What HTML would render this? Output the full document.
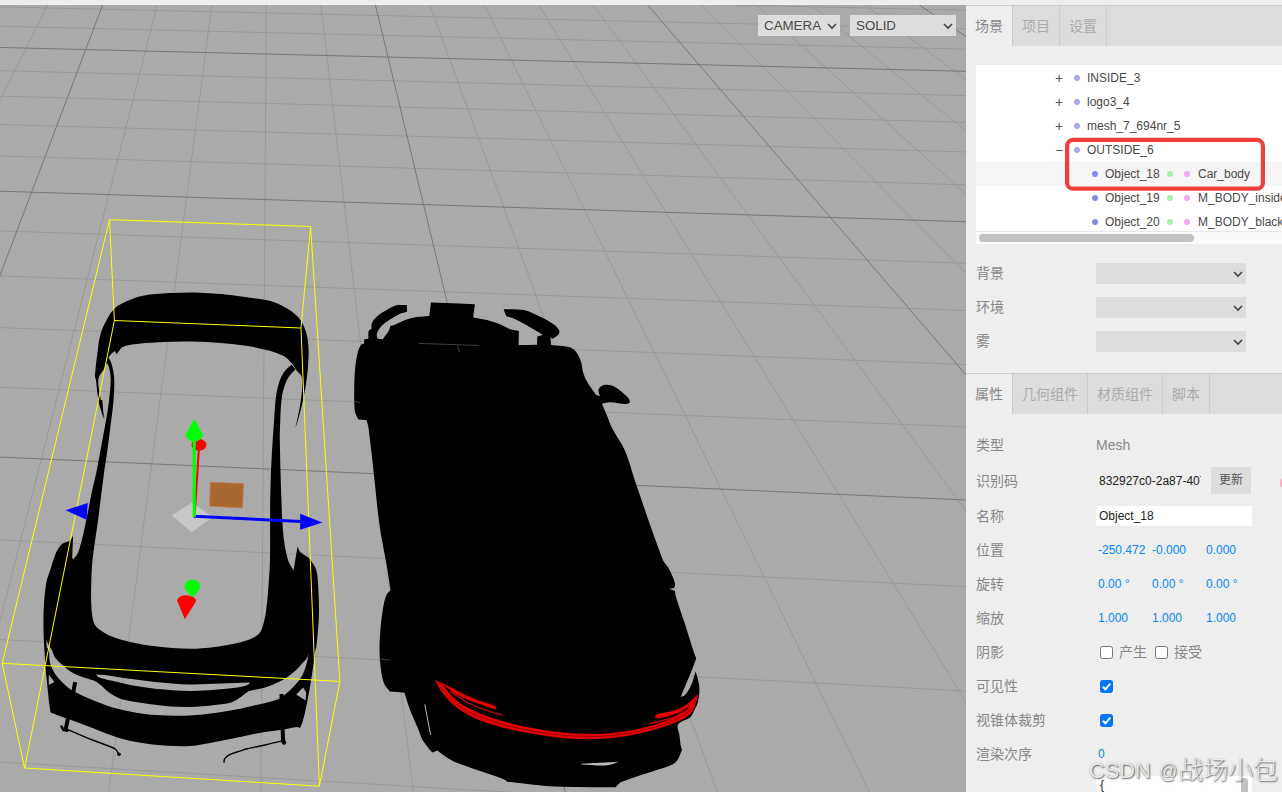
<!DOCTYPE html>
<html><head><meta charset="utf-8"><title>three.js editor</title>
<style>
*{box-sizing:border-box;margin:0;padding:0}
html,body{width:1282px;height:792px;overflow:hidden;background:#aaa}
body{position:relative;font-family:"Liberation Sans","Noto Sans CJK SC",sans-serif;font-size:14px;color:#888}
.abs{position:absolute}
#topbar{left:0;top:0;width:1282px;height:5px;background:#eee}
#vp{left:0;top:0;width:966px;height:792px;overflow:hidden;background:#aaa}
#side{left:966px;top:5px;width:316px;height:787px;background:#eee;overflow:hidden}
.tabs{left:0;width:316px;height:41px;background:#ddd;border-top:1px solid #ccc}
.tab{position:absolute;top:0;height:40px;line-height:40px;text-align:center;color:#aaa;border-right:1px solid #ccc;font-size:14px}
.tab.sel{background:#eee;color:#888}
.sel2{background:#ddd;height:21px;color:#4a4a4a;font-size:13.33px;line-height:21px;padding-left:6px}
.chev{position:absolute;right:2.3px;top:4.5px}
.lbl{position:absolute;left:10px;height:20px;line-height:20px;font-size:14px;color:#888;white-space:nowrap}
.num{position:absolute;font-size:12px;color:#08f;height:20px;line-height:20px;white-space:nowrap}
.row{position:absolute;left:0;width:400px;height:24px;line-height:24px;font-size:12px;color:#484848;white-space:nowrap}
.dot{position:absolute;top:9px;width:6px;height:6px;border-radius:50%}
.row span{position:absolute;top:0}
.cb{position:absolute;width:13px;height:13px;border:1px solid #767676;border-radius:2.5px;background:#fff}
.cb.on{background:#0075ff;border-color:#0075ff}
</style></head><body>
<div id="vp" class="abs"><svg width="966" height="792" viewBox="0 0 966 792" style="position:absolute;left:0;top:0">
<path d="M-154.1 -126.5L-4648.3 3142.6M-116.5 -125.9L-4300.0 3220.6M-78.8 -125.3L-3936.4 3301.9M-2.9 -124.0L-3158.8 3475.9M35.3 -123.4L-2742.5 3569.1M73.6 -122.7L-2306.0 3666.7M112.0 -122.1L-1847.8 3769.3M189.3 -120.8L-859.7 3990.4M228.2 -120.2L-326.0 4109.8M267.2 -119.6L237.2 4235.8M306.4 -118.9L832.2 4368.9M385.1 -117.6L2129.5 4659.2M424.7 -117.0L2838.3 4817.8M464.4 -116.3L3592.4 4986.6M504.3 -115.6L4396.3 5166.4M584.6 -114.3L6174.4 5564.3M624.9 -113.7L7161.1 5785.1M665.4 -113.0L8222.7 6022.6M706.1 -112.3L9368.2 6278.9M787.8 -111.0L11954.1 6857.6M829.0 -110.3L13420.9 7185.7M870.2 -109.6L15025.2 7544.7M911.7 -108.9L16787.5 7939.1M995.0 -107.6L20889.5 8856.9M1036.9 -106.9L23295.8 9395.3M1079.0 -106.2L25997.0 9999.8M1121.2 -105.5L29051.1 10683.1M1206.2 -104.1L36535.2 12357.8M1248.9 -103.4L41188.8 13399.1M1291.8 -102.7L46665.0 14624.4M1334.9 -102.0L53202.8 16087.3M-303.1 -129.0L1552.7 -98.4M-320.1 -119.9L1594.4 -87.5M-357.3 -100.1L1686.3 -63.4M-377.7 -89.2L1737.2 -50.1M-399.5 -77.5L1791.9 -35.7M-422.7 -65.1L1850.8 -20.3M-474.6 -37.5L1983.5 14.5M-503.5 -22.0L2058.6 34.1M-534.7 -5.3L2140.6 55.6M-568.6 12.8L2230.4 79.1M-645.8 54.0L2438.6 133.7M-690.0 77.5L2560.3 165.5M-738.6 103.5L2696.3 201.2M-792.5 132.2L2849.6 241.3M-919.5 200.0L3222.7 339.0M-995.1 240.4L3452.8 399.3M-1081.1 286.3L3721.8 469.8M-1179.5 338.8L4040.5 553.3M-1426.8 470.8L4894.3 776.9M-1585.0 555.2L5484.7 931.6M-1775.8 657.1L6247.9 1131.5M-2010.4 782.3L7272.8 1399.9M-2689.0 1144.5L10926.7 2357.0M-3206.2 1420.6L14687.9 3342.2M-3942.7 1813.7L22552.1 5402.1M-5075.3 2418.2L49287.7 12405.1" stroke="#989898" stroke-width="1" fill="none"/>
<path d="M-40.9 -124.6L-3556.4 3386.9M150.6 -121.5L-1366.3 3877.0M345.7 -118.3L1462.0 4509.8M544.4 -115.0L5255.0 5358.6M746.9 -111.6L10608.0 6556.4M953.3 -108.2L18732.3 8374.2M1163.6 -104.8L32531.7 11462.0M-338.1 -110.3L1638.8 -75.8M-447.7 -51.8L1914.5 -3.6M-605.5 32.5L2329.2 105.0M-852.4 164.2L3023.6 286.9M-1293.4 399.6L4424.0 653.7M-2305.7 939.9L8721.8 1779.5" stroke="#787878" stroke-width="1" fill="none"/>
<path d="M379.5 524.9C376.9 506.0 375.4 487.0 373.2 468.0C371.7 454.3 370.2 440.7 368.4 427.0C368.0 424.7 367.2 422.5 366.7 420.2C363.9 419.9 361.1 419.6 358.3 419.4C357.2 416.9 355.5 414.5 355.0 411.8C354.1 406.4 354.2 400.7 354.2 395.2C354.2 386.8 354.3 378.4 355.0 370.1C355.5 364.5 356.2 358.9 357.5 353.4C358.2 350.5 359.2 347.6 360.9 345.1C361.5 344.0 363.1 344.0 364.2 343.4C364.2 342.0 364.2 340.6 364.2 339.2C365.6 339.1 367.0 338.9 368.4 338.7C368.5 336.1 368.0 333.4 368.7 330.9C369.0 329.7 370.9 329.5 371.4 328.4C372.0 326.8 371.0 324.9 371.7 323.4C372.9 320.8 374.6 318.5 376.7 316.7C379.7 314.0 383.2 312.0 386.7 310.0C389.9 308.2 393.2 306.2 396.7 305.3C400.0 304.5 403.4 305.1 406.8 305.0C406.9 307.2 407.0 309.5 407.1 311.7C404.8 312.4 402.3 312.7 400.1 313.7C397.2 315.0 394.4 316.7 391.7 318.4C388.9 320.2 385.9 322.0 383.4 324.2C381.5 325.9 379.7 327.9 378.4 330.1C377.5 331.6 376.9 333.3 376.7 335.1C376.6 336.3 377.3 337.5 377.5 338.7C379.2 338.9 380.9 339.1 382.6 339.2C384.8 336.2 387.4 333.4 389.2 330.1C389.9 328.8 389.8 327.3 390.1 325.9C391.5 325.6 392.9 325.6 394.2 325.0C397.9 323.6 401.3 321.4 405.1 320.0C408.9 318.7 412.8 317.7 416.8 317.0C420.9 316.3 425.1 316.3 429.3 315.9C429.8 311.4 430.4 307.0 431.0 302.5C445.6 303.1 460.2 303.6 474.9 304.2C474.3 308.6 473.7 313.1 473.2 317.5C477.8 318.4 482.4 318.9 486.9 320.0C491.4 321.2 495.9 322.5 500.2 324.2C503.7 325.6 506.7 328.0 510.2 329.2C513.0 330.2 516.0 330.3 518.9 330.9C518.8 335.6 518.7 340.3 518.6 345.1C524.7 345.0 530.8 344.9 537.0 344.7C537.1 342.0 537.2 339.2 537.3 336.4C539.1 336.0 541.0 335.5 542.8 335.1C539.7 333.1 536.8 331.0 533.6 329.2C528.1 326.0 522.6 322.8 516.9 320.0C513.4 318.3 509.7 317.3 506.1 315.9C505.2 313.6 504.4 311.4 503.6 309.2C510.2 309.5 517.0 308.8 523.6 310.0C528.9 311.0 533.8 313.6 538.6 315.9C543.8 318.3 548.9 320.9 553.6 324.2C555.8 325.7 557.8 327.7 559.0 330.1C559.6 331.3 559.5 333.1 558.7 334.2C557.2 336.2 554.8 337.2 552.8 338.7C552.0 338.3 551.1 338.0 550.3 337.6C550.6 340.1 550.9 342.6 551.1 345.1C557.0 345.7 563.0 345.8 568.8 346.9C570.6 347.2 572.3 348.2 573.8 349.4C575.5 350.9 576.9 352.9 578.1 355.0C579.5 357.4 580.5 359.9 581.2 362.5C582.2 365.8 582.1 369.3 583.1 372.5C584.2 376.0 585.7 379.4 587.5 382.5C590.1 386.9 593.3 390.8 596.2 395.0C597.5 395.4 598.8 395.8 600.0 396.2C599.5 394.2 598.2 392.1 598.5 390.0C598.7 388.5 599.9 387.0 601.2 386.2C603.1 385.2 605.4 384.7 607.5 384.8C610.1 384.9 612.7 385.7 615.0 386.9C617.8 388.3 620.1 390.5 622.5 392.5C624.7 394.4 627.0 396.4 628.8 398.8C629.5 399.8 629.6 401.2 630.0 402.5C628.8 403.0 627.6 404.0 626.2 404.0C620.8 403.9 615.4 402.3 610.0 402.2C607.2 402.2 604.6 403.2 601.9 403.8C603.3 407.1 604.8 410.4 606.2 413.8C608.4 418.8 610.0 424.1 612.5 429.0C616.2 436.3 621.6 442.7 624.8 450.2C629.7 461.7 632.5 474.0 636.6 485.8C645.2 510.6 653.4 535.5 662.9 560.0C664.0 562.9 666.6 564.9 668.2 567.6C669.9 570.5 671.4 573.5 672.7 576.7C673.7 579.1 674.7 581.6 675.0 584.2C675.2 585.5 674.5 586.8 674.2 588.0C672.5 588.3 670.7 588.5 668.9 588.8C671.0 589.5 673.0 590.3 675.0 591.1C675.3 592.8 675.2 594.7 675.8 596.4C678.5 605.5 681.9 614.5 684.8 623.6C687.5 631.7 689.8 639.8 692.4 647.9C693.6 651.4 694.9 654.9 696.2 658.5C694.8 662.3 693.4 666.2 691.9 670.0C688.2 679.0 684.4 687.9 680.6 696.9C682.1 696.2 683.9 696.2 685.0 695.0C687.6 692.1 689.6 688.6 691.2 685.0C693.2 680.6 694.2 675.8 695.6 671.2C696.2 673.3 697.0 675.4 697.5 677.5C698.3 681.2 699.3 684.9 699.4 688.8C699.5 692.9 699.1 697.2 698.1 701.2C697.2 704.8 695.4 708.0 693.8 711.2C692.7 713.4 691.9 716.0 690.0 717.5C687.1 719.9 683.1 720.4 680.0 722.5C678.8 723.4 677.6 724.7 677.5 726.2C677.4 729.2 678.9 732.1 679.4 735.0C679.9 738.3 680.1 741.7 680.6 745.0C680.9 746.7 681.5 748.3 681.9 750.0C680.4 753.3 679.5 757.0 677.5 760.0C676.3 761.9 674.5 763.4 672.5 764.4C668.5 766.4 664.2 767.5 660.0 769.0C654.3 771.0 648.5 772.7 642.8 774.6C635.4 777.1 628.0 779.8 620.5 782.3C618.8 784.0 617.1 785.6 615.5 787.2C597.5 787.1 579.6 787.4 561.7 786.8C551.5 786.5 541.4 785.3 531.3 784.4C523.2 783.6 515.1 782.6 506.9 781.7C506.3 781.0 505.6 780.4 504.9 779.7C500.2 778.0 495.5 776.3 490.7 774.6C479.7 770.8 468.4 767.5 457.5 763.1C453.1 761.4 449.0 758.8 445.0 756.2C442.4 754.6 440.0 752.5 437.5 750.6C435.8 751.2 434.2 751.9 432.5 752.5C431.7 751.7 430.7 750.9 430.0 750.0C427.4 746.7 424.6 743.6 422.5 740.0C420.6 736.6 419.7 732.7 418.2 729.1C415.4 722.3 412.1 715.6 409.5 708.6C407.6 703.4 406.2 698.0 404.5 692.7C399.6 692.3 394.7 692.0 389.8 691.6C387.9 688.9 385.3 686.7 384.1 683.6C382.2 678.6 381.4 673.1 380.7 667.7C379.9 661.7 379.5 655.6 379.5 649.5C379.5 642.0 380.1 634.4 380.7 626.8C381.2 620.7 381.9 614.6 383.0 608.6C383.8 604.0 384.6 599.3 386.4 595.0C387.1 593.1 389.1 592.0 390.5 590.5C389.5 583.6 388.6 576.8 387.5 570.0C386.7 564.8 385.6 559.6 384.7 554.4C382.9 544.6 380.8 534.8 379.5 524.9Z" fill="#000"/>
<path d="M581.5 763.7C594.0 763.1 606.4 762.4 618.9 761.8C615.0 763.0 611.3 765.0 607.2 765.3C598.7 765.9 590.1 764.7 581.5 764.4C581.5 764.1 581.5 763.9 581.5 763.7Z" fill="#bbb"/>
<path d="M424.8 704.4 L430.6 735.0" stroke="#c8c8c8" stroke-width="0.9" fill="none"/>
<path d="M418.6 343.4 L479.4 345.5M457.2 345.5 L459.5 352.3M354.2 401.2 L360.2 402.7M380.2 659.2 L390.5 660.2" stroke="#666" stroke-width="0.6" fill="none"/>
<path d="M435.2 679.8C436.4 682.3 437.3 685.1 438.8 687.5C440.6 690.6 442.7 693.5 445.0 696.2C448.1 699.8 451.3 703.3 455.0 706.2C458.9 709.4 463.1 712.0 467.5 714.4C472.3 717.0 477.3 719.4 482.5 721.2C490.7 724.2 499.1 726.6 507.5 728.8C515.7 730.8 524.1 732.3 532.5 733.8C540.8 735.2 549.1 736.5 557.5 737.5C564.6 738.3 571.7 738.7 578.8 739.0C585.0 739.2 591.3 739.2 597.5 739.0C603.8 738.7 610.0 738.3 616.2 737.5C622.5 736.7 628.8 735.6 635.0 734.4C641.3 733.1 647.6 731.7 653.8 730.0C660.1 728.2 666.3 726.1 672.5 723.8C676.8 722.1 681.1 720.5 685.0 718.1C687.9 716.3 690.5 714.0 692.5 711.2C694.4 708.7 695.2 705.5 696.2 702.5C697.1 699.9 697.5 697.1 698.1 694.4C697.1 695.2 695.8 695.8 695.0 696.9C693.5 699.0 692.7 701.6 691.2 703.8C689.4 706.4 687.6 709.3 685.0 711.2C681.2 714.1 676.9 716.2 672.5 718.1C666.4 720.8 660.1 723.0 653.8 725.0C647.6 726.9 641.3 728.5 635.0 729.8C628.8 731.0 622.5 731.8 616.2 732.5C610.0 733.2 603.8 733.8 597.5 734.0C591.2 734.2 585.0 733.8 578.8 733.5C571.7 733.1 564.6 732.7 557.5 731.9C549.1 730.9 540.8 729.7 532.5 728.1C524.1 726.6 515.7 724.8 507.5 722.5C499.1 720.2 490.7 717.4 482.5 714.4C478.2 712.8 474.0 710.9 470.0 708.8C465.7 706.5 461.4 704.2 457.5 701.2C454.2 698.7 451.5 695.5 448.8 692.5C446.5 690.1 444.9 687.2 442.5 685.0C440.3 683.0 437.7 681.5 435.2 679.8Z" fill="#e40000"/>
<path d="M440.0 686.2C442.3 689.0 444.5 691.8 446.9 694.4C449.9 697.6 452.8 701.0 456.2 703.8C460.1 706.8 464.4 709.3 468.8 711.6C473.2 714.0 477.8 716.2 482.5 717.9C490.7 720.8 499.1 723.4 507.5 725.6C515.7 727.8 524.1 729.5 532.5 731.0C540.8 732.5 549.1 733.8 557.5 734.8C564.6 735.6 571.7 735.9 578.8 736.2C585.0 736.5 591.3 736.7 597.5 736.5C603.8 736.3 610.0 735.7 616.2 735.0C622.5 734.3 628.8 733.4 635.0 732.1C641.3 730.9 647.6 729.3 653.8 727.5C660.1 725.6 666.4 723.5 672.5 721.0C676.8 719.2 681.2 717.4 685.0 714.8C687.7 712.8 690.0 710.2 691.9 707.5C693.6 705.0 694.4 702.1 695.6 699.4" stroke="#400" stroke-width="0.6" fill="none" opacity=".8"/>
<path d="M436.2 680.0C441.2 682.5 446.2 685.0 451.2 687.5C458.3 691.0 465.2 695.1 472.5 698.1C479.8 701.2 487.5 703.1 495.0 705.6C495.6 707.1 496.2 708.5 496.9 710.0C490.0 707.7 483.0 705.7 476.2 703.1C469.9 700.7 463.5 698.2 457.5 695.0C453.0 692.6 449.2 689.2 445.0 686.2C442.1 684.2 439.2 682.1 436.2 680.0Z" fill="#e40000"/>
<path d="M654.4 718.1C655.2 716.8 656.0 715.4 656.9 714.0C662.9 712.8 669.1 712.0 675.0 710.2C678.5 709.2 681.9 707.6 685.0 705.6C687.8 703.9 690.0 701.5 692.5 699.4C694.2 697.9 695.8 696.3 697.5 694.8C696.7 696.5 696.2 698.5 695.0 700.0C692.8 702.8 690.4 705.4 687.5 707.5C684.0 710.0 680.3 712.2 676.2 713.8C671.0 715.8 665.5 717.0 660.0 718.1C658.2 718.5 656.2 718.1 654.4 718.1Z" fill="#e40000"/>
<path d="M450.0 691.2C456.7 695.4 463.0 700.1 470.0 703.8C476.0 706.8 482.4 709.0 488.8 711.2C493.2 712.8 497.9 713.9 502.5 715.2M648.8 723.8C652.5 722.9 656.3 722.3 660.0 721.2C665.1 719.9 670.1 718.4 675.0 716.5C678.5 715.1 681.7 713.0 685.0 711.2" stroke="#e40000" stroke-width="1.2" fill="none"/>
<path d="M114.6 308.4C117.7 305.5 121.6 303.6 125.5 301.8C131.2 299.3 136.9 296.9 143.0 295.7C151.6 294.0 160.4 293.7 169.2 293.1C177.9 292.6 186.7 292.3 195.4 292.4C204.9 292.6 214.4 293.3 223.8 294.2C233.3 295.1 242.7 296.6 252.2 297.9C258.0 298.7 264.0 299.1 269.7 300.7C275.8 302.6 281.6 305.2 287.1 308.4C291.2 310.7 295.0 313.6 298.1 317.1C300.9 320.3 303.0 324.1 304.6 328.0C306.3 332.2 307.3 336.7 307.9 341.2C308.6 346.2 308.7 351.3 308.5 356.4C308.3 363.7 307.7 371.0 306.8 378.3C306.0 384.9 304.9 391.4 303.5 397.9C302.3 403.8 300.7 409.6 299.2 415.4C298.0 419.8 296.7 424.1 295.4 428.5C297.0 420.5 299.0 412.6 300.2 404.5C301.4 397.3 302.2 390.0 302.4 382.7C302.5 380.4 302.3 378.1 301.3 376.1C300.1 373.6 297.6 371.8 295.9 369.5C294.6 367.8 294.0 365.6 292.6 364.1C289.6 360.9 286.8 357.2 282.8 355.4C274.5 351.6 265.5 349.5 256.6 347.7C245.8 345.5 234.8 344.4 223.8 343.3C212.9 342.3 202.0 341.8 191.0 341.6C180.1 341.4 169.2 341.7 158.3 342.2C149.5 342.7 140.8 343.2 132.1 344.4C128.7 344.9 125.1 345.4 122.2 347.3C119.8 348.9 118.6 351.9 116.8 354.3C116.1 353.2 115.3 352.1 114.6 351.0C112.8 352.8 110.5 354.3 109.1 356.4C107.9 358.4 107.8 360.9 107.0 363.0C106.0 365.2 104.9 367.4 103.7 369.5C102.4 371.8 100.3 373.7 99.3 376.1C98.5 378.1 98.1 380.4 98.2 382.7C98.5 387.8 99.5 392.9 100.4 397.9C101.7 405.3 103.3 412.5 104.8 419.8C102.6 412.5 99.9 405.4 98.2 397.9C96.9 392.2 96.9 386.3 96.0 380.5C95.8 379.0 94.9 377.6 94.9 376.1C95.4 368.1 96.5 360.1 97.6 352.1C98.3 346.2 98.8 340.3 100.4 334.6C101.9 329.3 104.3 324.2 107.0 319.3C109.1 315.4 111.4 311.4 114.6 308.4Z" fill="#000"/>
<path d="M107.0 361.9C107.1 363.9 108.7 365.5 109.1 367.4C110.0 370.9 110.6 374.6 110.7 378.3C110.8 383.4 110.3 388.5 109.8 393.6C109.3 399.4 108.5 405.2 107.6 411.0C106.5 418.4 105.0 425.6 103.7 432.9C102.5 439.6 101.2 446.3 100.0 453.0C98.9 458.7 98.1 464.4 96.9 470.0C95.6 476.3 93.9 482.5 92.5 488.8C91.2 495.0 90.0 501.2 88.8 507.5C87.5 513.8 86.3 520.0 85.0 526.2C83.8 531.7 82.7 537.1 81.2 542.5C80.2 546.3 79.2 550.2 77.5 553.8C76.5 555.9 74.6 557.5 73.1 559.4C72.8 558.8 72.5 558.1 72.2 557.5C72.5 550.2 72.8 542.9 73.1 535.6C72.1 537.3 71.6 539.4 70.0 540.6C67.8 542.3 64.7 542.1 62.5 543.8C60.4 545.4 58.8 547.7 57.5 550.0C55.9 552.7 54.8 555.8 53.8 558.8C52.5 562.1 51.7 565.6 50.6 569.0C49.3 573.3 47.2 577.5 46.4 582.0C44.9 591.0 44.1 600.1 43.7 609.3C43.2 618.4 43.5 627.5 43.7 636.6C43.8 641.0 44.1 645.5 44.4 650.0C44.8 656.3 45.1 662.5 45.6 668.8C46.1 675.0 46.9 681.3 47.5 687.5C48.1 693.3 48.6 699.2 49.4 705.0C49.7 707.5 50.2 710.0 50.6 712.5C55.4 714.4 60.2 716.4 65.0 718.1C67.0 718.9 69.2 719.3 71.2 720.0C78.4 722.6 85.4 725.4 92.5 728.1C100.8 731.3 109.0 734.9 117.5 737.5C125.7 740.0 134.1 741.7 142.5 743.1C150.8 744.5 159.1 745.2 167.5 745.8C175.0 746.2 182.5 746.6 190.0 746.0C198.4 745.3 206.7 743.4 215.0 741.9C223.4 740.3 231.7 738.5 240.0 736.9C248.3 735.2 256.6 733.3 265.0 731.9C270.0 731.0 275.0 730.8 280.0 730.0C285.9 729.1 291.6 727.4 297.5 726.9C298.4 726.8 299.2 727.7 300.0 728.1C300.6 726.7 301.4 725.3 301.9 723.8C303.1 720.0 304.1 716.3 305.0 712.5C306.4 706.3 307.6 700.0 308.8 693.8C309.9 687.5 310.9 681.3 311.9 675.0C312.5 670.8 313.2 666.7 313.8 662.5C314.3 658.3 314.7 654.1 315.4 650.0C315.5 649.1 316.1 648.4 316.2 647.5C317.1 641.3 317.7 635.0 318.1 628.8C318.6 622.5 319.0 616.3 319.0 610.0C319.0 601.7 318.7 593.3 318.1 585.0C317.8 580.0 317.7 574.8 316.2 570.0C315.2 566.3 312.6 563.3 310.6 560.0C310.0 559.0 309.4 558.1 308.5 557.4C305.9 555.4 302.6 554.3 300.3 551.9C298.9 550.5 298.5 548.3 297.6 546.5C296.2 554.5 294.8 562.5 293.5 570.5C291.7 567.0 289.1 563.9 288.0 560.1C285.7 552.1 284.2 543.8 283.4 535.6C282.0 522.0 281.7 508.3 281.2 494.6C280.5 476.4 280.1 458.2 279.8 440.0C279.7 434.0 279.9 428.0 280.2 422.0C280.5 413.9 280.7 405.9 281.7 397.9C282.3 393.5 283.5 389.1 285.0 384.8C286.0 381.8 287.5 378.8 289.3 376.1C291.0 373.6 293.4 371.7 295.4 369.5C294.3 367.9 293.1 366.3 291.9 364.7C290.7 365.6 289.3 366.3 288.2 367.4C286.2 369.4 284.2 371.4 282.8 373.9C280.9 377.3 279.5 381.1 278.4 384.8C277.2 389.1 276.3 393.5 275.8 397.9C274.8 405.9 274.6 414.0 274.0 422.0C273.3 432.3 272.4 442.6 271.9 453.0C271.1 466.8 270.5 480.7 270.3 494.6C269.9 516.4 270.3 538.2 270.0 560.0C270.0 564.2 269.6 568.3 269.4 572.5C269.0 578.8 268.6 585.0 268.1 591.2C267.6 597.5 267.1 603.8 266.2 610.0C265.7 614.2 264.9 618.4 263.8 622.5C262.8 625.9 262.1 629.6 260.0 632.5C258.2 635.0 255.3 636.7 252.5 638.1C248.6 640.1 244.3 641.5 240.0 642.5C231.8 644.4 223.4 645.8 215.0 646.9C206.7 647.9 198.4 648.8 190.0 648.8C178.3 648.6 166.6 647.6 155.0 646.2C146.6 645.3 138.2 643.8 130.0 641.9C123.6 640.4 117.3 638.7 111.2 636.2C107.3 634.7 103.5 632.4 100.0 630.0C98.1 628.7 96.2 627.0 95.0 625.0C93.6 622.7 93.0 620.1 92.5 617.5C91.7 613.0 91.4 608.3 91.2 603.8C91.0 597.5 91.1 591.2 91.2 585.0C91.5 576.7 91.6 568.3 92.5 560.0C93.9 546.6 96.3 533.3 98.1 520.0C99.2 511.7 100.2 503.3 101.2 495.0C102.3 486.7 103.2 478.3 104.4 470.0C105.1 464.3 106.2 458.7 107.0 453.0C108.1 444.8 109.2 436.7 110.2 428.5C111.4 419.1 112.8 409.6 113.5 400.1C114.1 392.9 114.6 385.6 114.2 378.3C113.9 373.1 112.7 368.0 111.3 363.0C110.8 361.0 109.4 359.4 108.5 357.5C108.0 359.0 106.9 360.4 107.0 361.9ZM46.2 640.0C47.5 642.5 48.6 645.1 50.0 647.5C50.5 648.4 51.4 649.1 51.9 650.0C53.1 652.4 53.4 655.3 55.0 657.5C57.0 660.4 59.9 662.7 62.5 665.0C65.3 667.5 68.1 670.0 71.2 671.9C74.8 674.0 78.7 675.4 82.5 676.9C86.2 678.3 90.1 679.1 93.8 680.6C96.0 681.6 98.1 682.9 100.0 684.4C102.7 686.4 104.8 689.1 107.5 691.2C109.9 693.1 112.4 694.8 115.0 696.2C117.4 697.5 119.9 698.7 122.5 699.4C129.1 701.0 135.8 702.1 142.5 703.1C150.8 704.4 159.1 705.6 167.5 706.2C175.0 706.8 182.5 707.1 190.0 706.9C198.4 706.7 206.7 705.9 215.0 705.0C220.4 704.4 226.0 704.1 231.2 702.5C234.5 701.5 237.2 699.3 240.0 697.5C242.6 695.8 244.7 693.3 247.5 691.9C249.8 690.7 252.5 690.4 255.0 689.8C258.3 688.9 261.7 688.5 265.0 687.5C269.3 686.1 273.4 684.4 277.5 682.5C281.0 680.9 284.3 679.0 287.5 676.9C290.6 674.8 293.5 672.5 296.2 670.0C298.5 667.9 300.5 665.5 302.5 663.1C304.2 661.1 306.2 659.2 307.5 656.9C308.2 655.6 308.2 654.0 308.5 652.5C308.4 654.0 308.4 655.4 308.1 656.9C307.6 659.6 307.1 662.3 306.2 665.0C305.2 668.4 304.2 671.9 302.5 675.0C300.8 678.2 298.6 681.0 296.2 683.8C293.6 686.9 290.7 689.9 287.5 692.5C284.4 695.1 281.2 697.8 277.5 699.4C271.5 701.8 265.0 702.8 258.8 704.4C252.5 705.9 246.3 707.5 240.0 708.8C231.7 710.4 223.4 712.0 215.0 713.1C206.7 714.3 198.4 715.2 190.0 715.6C182.5 716.0 175.0 715.9 167.5 715.6C159.1 715.3 150.8 714.9 142.5 713.8C134.1 712.6 125.7 710.9 117.5 708.8C111.1 707.1 104.9 704.9 98.8 702.5C92.4 700.1 86.2 697.2 80.0 694.4C77.0 693.0 73.9 691.8 71.2 690.0C68.1 687.8 65.2 685.2 62.5 682.5C59.8 679.8 57.0 677.0 55.0 673.8C52.8 670.3 51.0 666.5 50.0 662.5C48.9 658.5 49.6 654.1 48.8 650.0C48.5 649.0 47.1 648.5 46.9 647.5C46.3 645.1 46.5 642.5 46.2 640.0ZM96.2 674.4C99.2 674.6 102.1 674.6 105.0 675.0C111.3 675.9 117.5 677.3 123.8 678.1C134.1 679.6 144.6 680.9 155.0 681.9C166.6 683.0 178.3 684.1 190.0 684.4C200.4 684.6 210.8 683.8 221.2 683.5C230.8 683.2 240.4 682.8 250.0 682.5C249.2 683.3 248.6 684.6 247.5 685.0C244.3 686.3 240.9 687.0 237.5 687.5C230.0 688.6 222.5 689.2 215.0 689.8C206.7 690.4 198.3 691.1 190.0 691.0C178.3 690.8 166.6 689.9 155.0 688.8C146.6 687.9 138.3 686.5 130.0 685.0C123.7 683.8 117.5 682.2 111.2 680.6C106.8 679.5 102.3 678.6 98.1 676.9C97.2 676.5 96.9 675.2 96.2 674.4ZM48.8 674.4 L54.4 681.9 L48.8 685.0ZM296.2 694.4 L303.1 687.5 L306.2 692.5 L305.6 700.6Z" fill="#000" fill-rule="evenodd"/>
<path d="M75.2 682.2 L65.6 730.0M281.5 694.0 L283.1 742.5" stroke="#000" stroke-width="4" fill="none"/>
<path d="M61.5 726.5 L63.5 730.0 L67.5 730.6" stroke="#000" stroke-width="2.6" fill="none" stroke-linecap="round" stroke-linejoin="round"/>
<circle cx="284.0" cy="742.5" r="2.2" fill="#000"/>
<path d="M67.5 729.4C75.8 732.9 84.1 736.6 92.5 740.0C100.0 743.0 107.8 745.1 115.0 748.8C116.5 749.5 117.0 751.4 118.0 752.7M282.5 740.6C276.7 742.1 270.9 743.6 265.0 745.0C258.8 746.4 252.5 747.5 246.2 749.0C244.6 749.4 243.0 750.2 241.4 750.7C237.3 752.1 233.0 752.9 229.1 754.8C227.3 755.7 225.8 757.2 224.6 758.9C224.0 759.7 224.2 760.9 224.0 762.0" stroke="#000" stroke-width="1.4" fill="none" stroke-linecap="round"/>
<circle cx="119.0" cy="754.2" r="1.8" fill="#000"/>
<path d="M97.9 400.0 L103.7 418.9 L102.3 400.0ZM302.6 400.0 L295.3 427.6 L300.2 411.6 L301.4 400.0Z" fill="#000"/>
<path d="M109.5 219.7 L310.6 226.5M310.6 226.5 L301.0 328.0M301.0 328.0 L114.4 320.5M114.4 320.5 L109.5 219.7M2.2 663.3 L339.9 681.4M339.9 681.4 L319.4 786.2M319.4 786.2 L24.6 768.0M24.6 768.0 L2.2 663.3M109.5 219.7 L2.2 663.3M310.6 226.5 L339.9 681.4M114.4 320.5 L24.6 768.0M301.0 328.0 L319.4 786.2" stroke="#ffff00" stroke-width="1" fill="none"/>
<path d="M171.9 515.5 L192.2 502.2 L212.6 517.6 L191.7 532.1Z" fill="#fff" fill-opacity="0.35"/>
<path d="M210.2 482.2 L243.6 483.6 L242.5 508.0 L209.7 506.2Z" fill="#a9682f" stroke="#c87858" stroke-width="0.8"/>
<ellipse cx="199" cy="444.8" rx="7.5" ry="5.9" fill="#ff0000"/>
<path d="M198.9 449.3 L194.6 516.1" stroke="#ff0000" stroke-width="2" fill="none"/>
<path d="M193.7 516.3 L301.1 521.5" stroke="#0000ff" stroke-width="3.1" fill="none"/>
<path d="M300.2 513.8 L322.3 522.5 L300.2 529.8Z" fill="#0000ff"/>
<path d="M65.6 510.2 L87.8 503.1 L86.5 519.8Z" fill="#0000ff"/>
<path d="M194.2 438.0 L194.2 517.0" stroke="#00ff00" stroke-width="3.2" fill="none"/>
<path d="M194.3 418.9 L185.0 435.4 Q194.3 447.9 203.3 435.4 Z" fill="#00ff00"/>
<path d="M184.4 587 a7.9 7.4 0 1 1 15.8 0 q-1.8 5 -7.9 10.2 q-6.1 -5.2 -7.9 -10.2Z" fill="#00ff00"/>
<path d="M177 600.6 Q178 596.6 183 595.4 Q189 594.6 193.5 597.2 Q196 599 196.2 601 L184.9 619.3 Z" fill="#ff0000"/>
</svg>
<div class="abs sel2" style="left:758px;top:15px;width:82px">CAMERA<svg class="chev" width="12" height="12" viewBox="0 0 12 12"><path d="M2 4l4 4 4-4" stroke="#444" stroke-width="1.6" fill="none"/></svg></div>
<div class="abs sel2" style="left:850px;top:15px;width:106px">SOLID<svg class="chev" width="12" height="12" viewBox="0 0 12 12"><path d="M2 4l4 4 4-4" stroke="#444" stroke-width="1.6" fill="none"/></svg></div>
</div>
<div id="topbar" class="abs"></div>
<div id="side" class="abs">
 <div class="tabs abs" style="top:0">
  <div class="tab sel" style="left:0;width:47px">场景</div>
  <div class="tab" style="left:47px;width:47px">项目</div>
  <div class="tab" style="left:94px;width:47px">设置</div>
 </div>
 <div class="abs" id="outliner" style="left:10px;top:60px;width:306px;height:179px;background:#fff;overflow:hidden;padding-top:1px">
  <div class="row" style="top:1px"><span style="left:79px;font-size:14px;color:#555">+</span><i class="dot" style="left:98px;background:#aaaaee"></i><span style="left:111px">INSIDE_3</span></div>
  <div class="row" style="top:25px"><span style="left:79px;font-size:14px;color:#555">+</span><i class="dot" style="left:98px;background:#aaaaee"></i><span style="left:111px">logo3_4</span></div>
  <div class="row" style="top:49px"><span style="left:79px;font-size:14px;color:#555">+</span><i class="dot" style="left:98px;background:#aaaaee"></i><span style="left:111px">mesh_7_694nr_5</span></div>
  <div class="row" style="top:73px"><span style="left:79px;font-size:14px;color:#555">&minus;</span><i class="dot" style="left:98px;background:#aaaaee"></i><span style="left:111px">OUTSIDE_6</span></div>
  <div class="row" style="top:97px;background:#f5f5f5"><i class="dot" style="left:116px;background:#8888ee"></i><span style="left:129px">Object_18</span><i class="dot" style="left:191px;background:#aaeeaa"></i><i class="dot" style="left:208px;background:#eeaaee"></i><span style="left:222px">Car_body</span></div>
  <div class="row" style="top:121px"><i class="dot" style="left:116px;background:#8888ee"></i><span style="left:129px">Object_19</span><i class="dot" style="left:191px;background:#aaeeaa"></i><i class="dot" style="left:208px;background:#eeaaee"></i><span style="left:222px">M_BODY_inside</span></div>
  <div class="row" style="top:145px"><i class="dot" style="left:116px;background:#8888ee"></i><span style="left:129px">Object_20</span><i class="dot" style="left:191px;background:#aaeeaa"></i><i class="dot" style="left:208px;background:#eeaaee"></i><span style="left:222px">M_BODY_black</span></div>
  <div class="abs" style="left:0;top:166px;width:306px;height:13px;background:#fafafa;border-top:1px solid #e8e8e8"></div>
  <div class="abs" style="left:3px;top:169px;width:215px;height:8px;border-radius:4px;background:#c1c1c1"></div>
 </div>
 <svg class="abs" style="left:95px;top:128px" width="210" height="64" viewBox="95 128 210 64"><rect x="101.1" y="134.9" width="195.8" height="48.8" rx="6" ry="6" fill="none" stroke="#ee403b" stroke-width="4.2"/></svg>

 <div class="lbl" style="top:258px">背景</div><div class="abs sel2" style="left:130px;top:258px;width:150px"><svg class="chev" width="12" height="12" viewBox="0 0 12 12"><path d="M2 4l4 4 4-4" stroke="#444" stroke-width="1.6" fill="none"/></svg></div>
 <div class="lbl" style="top:292px">环境</div><div class="abs sel2" style="left:130px;top:292px;width:150px"><svg class="chev" width="12" height="12" viewBox="0 0 12 12"><path d="M2 4l4 4 4-4" stroke="#444" stroke-width="1.6" fill="none"/></svg></div>
 <div class="lbl" style="top:326px">雾</div><div class="abs sel2" style="left:130px;top:326px;width:150px"><svg class="chev" width="12" height="12" viewBox="0 0 12 12"><path d="M2 4l4 4 4-4" stroke="#444" stroke-width="1.6" fill="none"/></svg></div>

 <div class="tabs abs" style="top:368px">
  <div class="tab sel" style="left:0;width:47px">属性</div>
  <div class="tab" style="left:47px;width:75px">几何组件</div>
  <div class="tab" style="left:122px;width:75px">材质组件</div>
  <div class="tab" style="left:197px;width:47px">脚本</div>
 </div>

 <div class="lbl" style="top:430px">类型</div><div class="lbl" style="left:130px;top:430px">Mesh</div>
 <div class="lbl" style="top:466px">识别码</div><div class="num" style="left:133px;top:466px;color:#222;width:102px;overflow:hidden">832927c0-2a87-407</div>
 <div class="abs" style="left:245px;top:462px;width:40px;height:27px;background:#ddd;color:#555;font-size:12px;line-height:27px;text-align:center">更新</div>
 <div class="lbl" style="top:501px">名称</div><div class="abs" style="left:130px;top:501px;width:156px;height:20px;background:#fff;color:#222;font-size:12px;line-height:20px;padding-left:3px">Object_18</div>
 <div class="lbl" style="top:535px">位置</div><div class="num" style="left:132px;top:535px">-250.472</div><div class="num" style="left:186px;top:535px">-0.000</div><div class="num" style="left:240px;top:535px">0.000</div>
 <div class="lbl" style="top:569px">旋转</div><div class="num" style="left:132px;top:569px">0.00 °</div><div class="num" style="left:186px;top:569px">0.00 °</div><div class="num" style="left:240px;top:569px">0.00 °</div>
 <div class="lbl" style="top:603px">缩放</div><div class="num" style="left:132px;top:603px">1.000</div><div class="num" style="left:186px;top:603px">1.000</div><div class="num" style="left:240px;top:603px">1.000</div>
 <div class="lbl" style="top:637px">阴影</div><div class="cb" style="left:134px;top:641px"></div><div class="lbl" style="left:153px;top:637px">产生</div><div class="cb" style="left:189px;top:641px"></div><div class="lbl" style="left:208px;top:637px">接受</div>
 <div class="lbl" style="top:671px">可见性</div><div class="cb on" style="left:134px;top:675px"><svg width="11" height="11" viewBox="0 0 11 11" style="position:absolute;left:0;top:0"><path d="M1.8 5.7l2.6 2.6 4.9-5.7" stroke="#fff" stroke-width="2" fill="none"/></svg></div>
 <div class="lbl" style="top:705px">视锥体裁剪</div><div class="cb on" style="left:134px;top:709px"><svg width="11" height="11" viewBox="0 0 11 11" style="position:absolute;left:0;top:0"><path d="M1.8 5.7l2.6 2.6 4.9-5.7" stroke="#fff" stroke-width="2" fill="none"/></svg></div>
 <div class="lbl" style="top:739px">渲染次序</div><div class="num" style="left:132px;top:739px">0</div>
 <div class="abs" style="left:130px;top:771px;width:156px;height:30px;background:#fff;color:#222;font-size:12px;line-height:19px;padding-left:4px">{</div>
 <div class="abs" style="left:275px;top:773px;width:7px;height:30px;border-radius:4px;background:#c1c1c1"></div>
 <div class="abs" style="left:314px;top:471px;width:14px;height:14px;border-radius:50%;background:#f9a8c0"></div>
</div>
<div class="abs" id="wm" style="left:0;top:0;width:1282px;height:792px;pointer-events:none;color:rgba(255,255,255,.85);text-shadow:1px 1px 1.5px rgba(0,0,0,.55),0 0 1px rgba(0,0,0,.35);font-weight:300;white-space:nowrap">
<span class="abs" id="wm1" style="left:1088.5px;top:755.7px;font-size:22.6px;line-height:30px;transform-origin:0 0;transform:scaleX(.965)">CSDN</span>
<span class="abs" id="wm2" style="left:1159.3px;top:755.5px;font-size:20px;line-height:30px;transform-origin:0 0;transform:scaleX(.9)">@</span>
<span class="abs" id="wm3" style="left:1178.6px;top:755.5px;font-size:24.8px;line-height:30px">战场小包</span>
</div>
</body></html>
